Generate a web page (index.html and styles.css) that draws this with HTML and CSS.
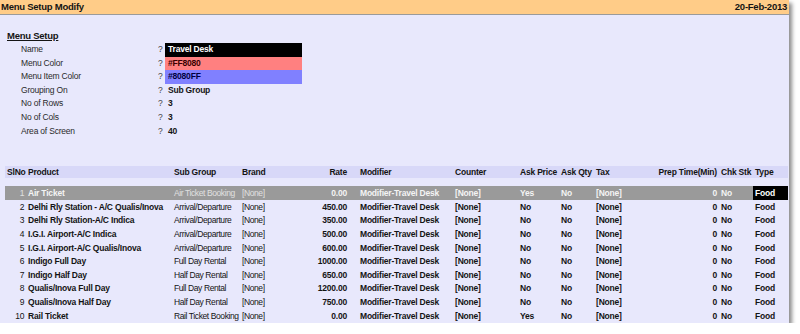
FILE: index.html
```html
<!DOCTYPE html>
<html lang="en">
<head>
    <meta charset="UTF-8">
    <title>Menu Setup Modify</title>
    <link rel="stylesheet" href="styles.css">
</head>
<body>

    <div class="panel">
        <div class="titlebar">
            <span>Menu Setup Modify</span>
            <span>20-Feb-2013</span>
        </div>

        <div class="section-title">Menu Setup</div>

        <div class="form">
            <div class="label">Name</div><div class="q">?</div><div class="value name-box">Travel Desk</div>
            <div class="label">Menu Color</div><div class="q">?</div><div class="value menu-color">#FF8080</div>
            <div class="label">Menu Item Color</div><div class="q">?</div><div class="value item-color">#8080FF</div>
            <div class="label">Grouping On</div><div class="q">?</div><div class="value">Sub Group</div>
            <div class="label">No of Rows</div><div class="q">?</div><div class="value">3</div>
            <div class="label">No of Cols</div><div class="q">?</div><div class="value">3</div>
            <div class="label">Area of Screen</div><div class="q">?</div><div class="value">40</div>
        </div>

        <div class="grid head">
            <div class="num">SlNo</div>
            <div>Product</div>
            <div>Sub Group</div>
            <div>Brand</div>
            <div class="num">Rate</div>
            <div class="mod">Modifier</div>
            <div>Counter</div>
            <div>Ask Price</div>
            <div>Ask Qty</div>
            <div>Tax</div>
            <div class="num">Prep Time(Min)</div>
            <div>Chk Stk</div>
            <div>Type</div>
        </div>

        <div class="rows">
            <div class="grid row selected">
                <div class="num plain">1</div><div>Air Ticket</div><div class="plain">Air Ticket Booking</div><div class="plain">[None]</div>
                <div class="num">0.00</div><div class="mod">Modifier-Travel Desk</div><div>[None]</div><div>Yes</div><div>No</div><div>[None]</div>
                <div class="num">0</div><div>No</div><div class="type">Food</div>
            </div>
            <div class="grid row">
                <div class="num plain">2</div><div>Delhi Rly Station - A/C Qualis/Inova</div><div class="plain">Arrival/Departure</div><div class="plain">[None]</div>
                <div class="num">450.00</div><div class="mod">Modifier-Travel Desk</div><div>[None]</div><div>No</div><div>No</div><div>[None]</div>
                <div class="num">0</div><div>No</div><div>Food</div>
            </div>
            <div class="grid row">
                <div class="num plain">3</div><div>Delhi Rly Station-A/C Indica</div><div class="plain">Arrival/Departure</div><div class="plain">[None]</div>
                <div class="num">350.00</div><div class="mod">Modifier-Travel Desk</div><div>[None]</div><div>No</div><div>No</div><div>[None]</div>
                <div class="num">0</div><div>No</div><div>Food</div>
            </div>
            <div class="grid row">
                <div class="num plain">4</div><div>I.G.I. Airport-A/C Indica</div><div class="plain">Arrival/Departure</div><div class="plain">[None]</div>
                <div class="num">500.00</div><div class="mod">Modifier-Travel Desk</div><div>[None]</div><div>No</div><div>No</div><div>[None]</div>
                <div class="num">0</div><div>No</div><div>Food</div>
            </div>
            <div class="grid row">
                <div class="num plain">5</div><div>I.G.I. Airport-A/C Qualis/Inova</div><div class="plain">Arrival/Departure</div><div class="plain">[None]</div>
                <div class="num">600.00</div><div class="mod">Modifier-Travel Desk</div><div>[None]</div><div>No</div><div>No</div><div>[None]</div>
                <div class="num">0</div><div>No</div><div>Food</div>
            </div>
            <div class="grid row">
                <div class="num plain">6</div><div>Indigo Full Day</div><div class="plain">Full Day Rental</div><div class="plain">[None]</div>
                <div class="num">1000.00</div><div class="mod">Modifier-Travel Desk</div><div>[None]</div><div>No</div><div>No</div><div>[None]</div>
                <div class="num">0</div><div>No</div><div>Food</div>
            </div>
            <div class="grid row">
                <div class="num plain">7</div><div>Indigo Half Day</div><div class="plain">Half Day Rental</div><div class="plain">[None]</div>
                <div class="num">650.00</div><div class="mod">Modifier-Travel Desk</div><div>[None]</div><div>No</div><div>No</div><div>[None]</div>
                <div class="num">0</div><div>No</div><div>Food</div>
            </div>
            <div class="grid row">
                <div class="num plain">8</div><div>Qualis/Inova Full Day</div><div class="plain">Full Day Rental</div><div class="plain">[None]</div>
                <div class="num">1200.00</div><div class="mod">Modifier-Travel Desk</div><div>[None]</div><div>No</div><div>No</div><div>[None]</div>
                <div class="num">0</div><div>No</div><div>Food</div>
            </div>
            <div class="grid row">
                <div class="num plain">9</div><div>Qualis/Inova Half Day</div><div class="plain">Half Day Rental</div><div class="plain">[None]</div>
                <div class="num">750.00</div><div class="mod">Modifier-Travel Desk</div><div>[None]</div><div>No</div><div>No</div><div>[None]</div>
                <div class="num">0</div><div>No</div><div>Food</div>
            </div>
            <div class="grid row">
                <div class="num plain">10</div><div>Rail Ticket</div><div class="plain">Rail Ticket Booking</div><div class="plain">[None]</div>
                <div class="num">0.00</div><div class="mod">Modifier-Travel Desk</div><div>[None]</div><div>Yes</div><div>No</div><div>[None]</div>
                <div class="num">0</div><div>No</div><div>Food</div>
            </div>
        </div>
    </div>

</body>
</html>
```

FILE: styles.css
```css
* {
    box-sizing: border-box;
    margin: 0;
    padding: 0;
    font-family: "Liberation Sans", Arial, sans-serif;
}

body {
    background: white;
}

.panel {
    width: 789px;
    height: 323px;
    background: #e8e8fc;
    box-shadow: 3px 3px 4px rgba(0, 0, 0, 0.45);
    color: #141414;
    font-size: 8.5px;
    letter-spacing: -0.2px;
}

.titlebar {
    display: flex;
    justify-content: space-between;
    height: 15px;
    line-height: 14px;
    padding: 0 2px 0 1px;
    background: #ffcc88;
    border-bottom: 1px solid #9a9a9a;
    font-size: 9.5px;
    font-weight: bold;
    letter-spacing: -0.25px;
}

.section-title {
    margin: 15px 0 0 7px;
    line-height: 12px;
    font-size: 9.5px;
    font-weight: bold;
    text-decoration: underline;
    letter-spacing: -0.25px;
}

.form {
    display: grid;
    grid-template-columns: 135px 9px 137px;
    grid-auto-rows: 13.6px;
    margin: 1px 0 0 21px;
    line-height: 13.6px;
}

.label {
    color: #2a2a2a;
}

.q {
    padding-left: 2px;
    color: #444;
}

.value {
    padding-left: 3px;
    font-weight: bold;
}

.name-box {
    background: black;
    color: white;
}

.menu-color {
    background: #ff8080;
    color: #3a0000;
}

.item-color {
    background: #8080ff;
    color: #000040;
}

.grid {
    display: grid;
    grid-template-columns: 21px 146px 68px 60px 49px 104px 65px 41px 35px 56px 69px 34px 35px;
    margin-left: 5px;
    width: 783px;
}

.grid > div {
    padding: 0 2px;
    white-space: nowrap;
    overflow: hidden;
}

.grid .num {
    text-align: right;
}

.grid .mod {
    padding-left: 11px;
}

.head {
    margin-top: 28px;
    height: 12px;
    line-height: 13px;
    background: #d8d8f8;
    font-weight: bold;
}

.rows {
    margin-top: 8px;
}

.row {
    height: 13.6px;
    line-height: 15px;
    font-weight: bold;
}

.row .plain {
    font-weight: normal;
    letter-spacing: -0.4px;
}

.selected {
    background: #9a9a9a;
    color: #f4f4f4;
}

.selected .plain {
    color: #e0e0e0;
}

.selected .type {
    background: black;
    color: white;
}
```
